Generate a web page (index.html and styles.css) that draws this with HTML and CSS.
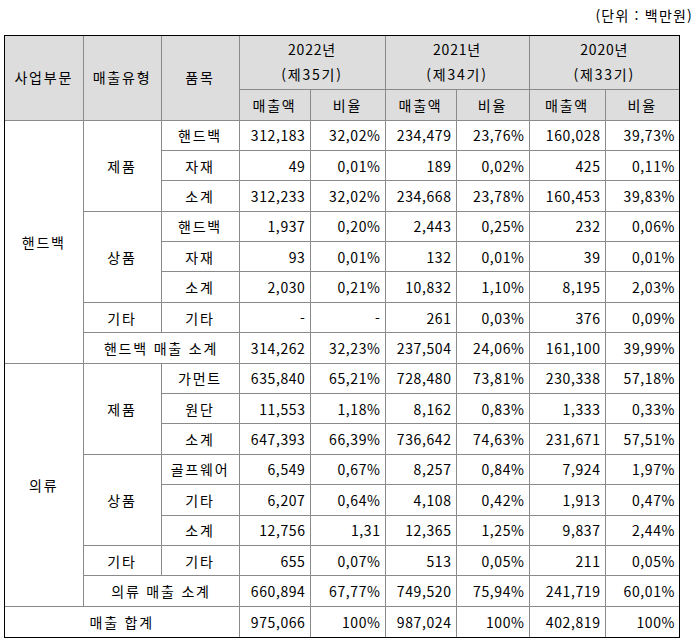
FILE: index.html
```html
<!DOCTYPE html>
<html lang="ko">
<head>
<meta charset="utf-8">
<title>매출 현황</title>
<link rel="stylesheet" href="styles.css">
</head>
<body>
<div class="page">
  <div class="unit">(단위 : 백만원)</div>
  <div class="frame">
    <table class="sales">
      <colgroup>
        <col class="c-seg"><col class="c-type"><col class="c-item">
        <col class="c-amt1"><col class="c-rat1">
        <col class="c-amt2"><col class="c-rat2">
        <col class="c-amt3"><col class="c-rat3">
      </colgroup>
      <thead>
        <tr class="hrow1">
          <th rowspan="2">사업부문</th>
          <th rowspan="2">매출유형</th>
          <th rowspan="2">품목</th>
          <th colspan="2"><span class="yr">2022년</span><br>(제35기)</th>
          <th colspan="2"><span class="yr">2021년</span><br>(제34기)</th>
          <th colspan="2"><span class="yr">2020년</span><br>(제33기)</th>
        </tr>
        <tr class="hrow2">
          <th>매출액</th><th>비율</th>
          <th>매출액</th><th>비율</th>
          <th>매출액</th><th>비율</th>
        </tr>
      </thead>
      <tbody>
        <tr>
          <td class="ctr" rowspan="8">핸드백</td>
          <td class="ctr" rowspan="3">제품</td>
          <td class="ctr">핸드백</td>
          <td class="num">312,183</td><td class="num">32,02%</td>
          <td class="num">234,479</td><td class="num">23,76%</td>
          <td class="num">160,028</td><td class="num">39,73%</td>
        </tr>
        <tr>
          <td class="ctr">자재</td>
          <td class="num">49</td><td class="num">0,01%</td>
          <td class="num">189</td><td class="num">0,02%</td>
          <td class="num">425</td><td class="num">0,11%</td>
        </tr>
        <tr>
          <td class="ctr">소계</td>
          <td class="num">312,233</td><td class="num">32,02%</td>
          <td class="num">234,668</td><td class="num">23,78%</td>
          <td class="num">160,453</td><td class="num">39,83%</td>
        </tr>
        <tr>
          <td class="ctr" rowspan="3">상품</td>
          <td class="ctr">핸드백</td>
          <td class="num">1,937</td><td class="num">0,20%</td>
          <td class="num">2,443</td><td class="num">0,25%</td>
          <td class="num">232</td><td class="num">0,06%</td>
        </tr>
        <tr>
          <td class="ctr">자재</td>
          <td class="num">93</td><td class="num">0,01%</td>
          <td class="num">132</td><td class="num">0,01%</td>
          <td class="num">39</td><td class="num">0,01%</td>
        </tr>
        <tr>
          <td class="ctr">소계</td>
          <td class="num">2,030</td><td class="num">0,21%</td>
          <td class="num">10,832</td><td class="num">1,10%</td>
          <td class="num">8,195</td><td class="num">2,03%</td>
        </tr>
        <tr>
          <td class="ctr">기타</td>
          <td class="ctr">기타</td>
          <td class="num">-</td><td class="num">-</td>
          <td class="num">261</td><td class="num">0,03%</td>
          <td class="num">376</td><td class="num">0,09%</td>
        </tr>
        <tr>
          <td class="ctr" colspan="2">핸드백 매출 소계</td>
          <td class="num">314,262</td><td class="num">32,23%</td>
          <td class="num">237,504</td><td class="num">24,06%</td>
          <td class="num">161,100</td><td class="num">39,99%</td>
        </tr>
        <tr>
          <td class="ctr" rowspan="8">의류</td>
          <td class="ctr" rowspan="3">제품</td>
          <td class="ctr">가먼트</td>
          <td class="num">635,840</td><td class="num">65,21%</td>
          <td class="num">728,480</td><td class="num">73,81%</td>
          <td class="num">230,338</td><td class="num">57,18%</td>
        </tr>
        <tr>
          <td class="ctr">원단</td>
          <td class="num">11,553</td><td class="num">1,18%</td>
          <td class="num">8,162</td><td class="num">0,83%</td>
          <td class="num">1,333</td><td class="num">0,33%</td>
        </tr>
        <tr>
          <td class="ctr">소계</td>
          <td class="num">647,393</td><td class="num">66,39%</td>
          <td class="num">736,642</td><td class="num">74,63%</td>
          <td class="num">231,671</td><td class="num">57,51%</td>
        </tr>
        <tr>
          <td class="ctr" rowspan="3">상품</td>
          <td class="ctr">골프웨어</td>
          <td class="num">6,549</td><td class="num">0,67%</td>
          <td class="num">8,257</td><td class="num">0,84%</td>
          <td class="num">7,924</td><td class="num">1,97%</td>
        </tr>
        <tr>
          <td class="ctr">기타</td>
          <td class="num">6,207</td><td class="num">0,64%</td>
          <td class="num">4,108</td><td class="num">0,42%</td>
          <td class="num">1,913</td><td class="num">0,47%</td>
        </tr>
        <tr>
          <td class="ctr">소계</td>
          <td class="num">12,756</td><td class="num">1,31</td>
          <td class="num">12,365</td><td class="num">1,25%</td>
          <td class="num">9,837</td><td class="num">2,44%</td>
        </tr>
        <tr>
          <td class="ctr">기타</td>
          <td class="ctr">기타</td>
          <td class="num">655</td><td class="num">0,07%</td>
          <td class="num">513</td><td class="num">0,05%</td>
          <td class="num">211</td><td class="num">0,05%</td>
        </tr>
        <tr>
          <td class="ctr" colspan="2">의류 매출 소계</td>
          <td class="num">660,894</td><td class="num">67,77%</td>
          <td class="num">749,520</td><td class="num">75,94%</td>
          <td class="num">241,719</td><td class="num">60,01%</td>
        </tr>
        <tr>
          <td class="ctr" colspan="3">매출 합계</td>
          <td class="num">975,066</td><td class="num">100%</td>
          <td class="num">987,024</td><td class="num">100%</td>
          <td class="num">402,819</td><td class="num">100%</td>
        </tr>
      </tbody>
    </table>
  </div>
</div>
</body>
</html>
```

FILE: styles.css
```css
html, body {
  margin: 0;
  padding: 0;
  background: #ffffff;
}

body {
  font-family: "Noto Sans CJK KR", "Noto Sans", sans-serif;
  font-size: 14px;
  color: #000000;
}

.page {
  width: 699px;
  padding: 7px 0 0 4px;
  box-sizing: border-box;
}

.unit {
  text-align: right;
  padding-right: 6px;
  height: 21px;
  line-height: 16px;
  margin-bottom: 7px;
  letter-spacing: 1.2px;
}

.frame {
  display: inline-block;
  border: 1px solid #000000;
}

.sales {
  border-collapse: collapse;
  border-style: hidden;
  table-layout: fixed;
  width: 674px;
}

.c-seg { width: 78px; }
.c-type { width: 78px; }
.c-item { width: 78px; }
.c-amt1 { width: 71px; }
.c-rat1 { width: 75px; }
.c-amt2 { width: 71px; }
.c-rat2 { width: 73px; }
.c-amt3 { width: 76px; }
.c-rat3 { width: 74px; }

.sales th,
.sales td {
  border: 1px solid #8a8a8a;
  padding: 0 4px;
  font-weight: normal;
  white-space: nowrap;
  letter-spacing: 1.8px;
}

.sales th {
  background: #dddddd;
  text-align: center;
  vertical-align: middle;
}

.yr {
  letter-spacing: 0.8px;
}

.hrow1 {
  height: 53px;
}

.hrow1 th {
  line-height: 25px;
}

.hrow2 {
  height: 31px;
}

.sales tbody tr {
  height: 30.4px;
}

.ctr {
  text-align: center;
  vertical-align: middle;
}

.sales .num {
  text-align: right;
  vertical-align: middle;
  padding-right: 4px;
  letter-spacing: 0.6px;
}
```
